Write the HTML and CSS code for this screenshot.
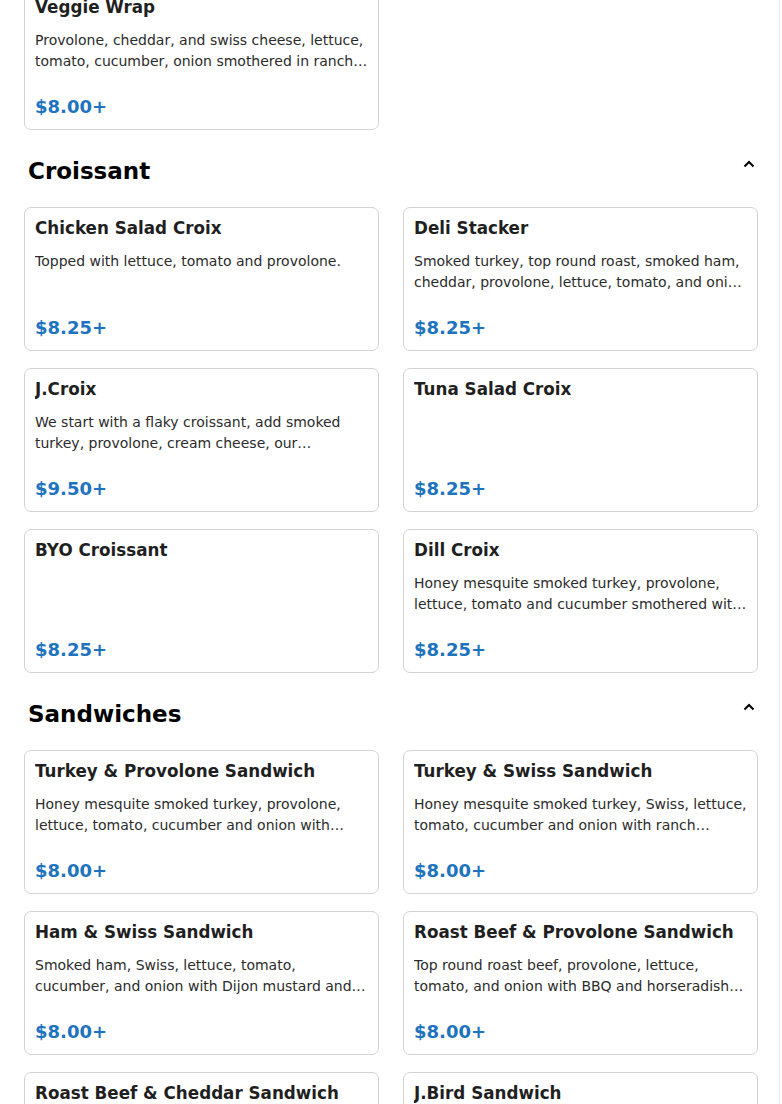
FILE: index.html
```html
<!DOCTYPE html>
<html lang="en">
<head>
<meta charset="utf-8">
<title>Menu</title>
<link rel="stylesheet" href="styles.css">
</head>
<body>
<div class="page">
  <main class="menu">
    <section class="section section-first">
      <div class="grid">
        <article class="card">
          <h3 class="card-title">Veggie Wrap</h3>
          <p class="card-desc">Provolone, cheddar, and swiss cheese, lettuce, tomato, cucumber, onion smothered in ranch dressing.</p>
          <div class="card-price">$8.00+</div>
        </article>
      </div>
    </section>

    <section class="section">
      <header class="section-head">
        <h2 class="section-title">Croissant</h2>
        <button class="toggle" aria-label="Collapse">
          <svg width="12" height="8" viewBox="0 0 12 8"><polyline points="1.5,6.5 6,2 10.5,6.5" fill="none" stroke="#000" stroke-width="2"/></svg>
        </button>
      </header>
      <div class="grid">
        <article class="card">
          <h3 class="card-title">Chicken Salad Croix</h3>
          <p class="card-desc">Topped with lettuce, tomato and provolone.</p>
          <div class="card-price">$8.25+</div>
        </article>
        <article class="card">
          <h3 class="card-title">Deli Stacker</h3>
          <p class="card-desc">Smoked turkey, top round roast, smoked ham, cheddar, provolone, lettuce, tomato, and onion with mayo and mustard.</p>
          <div class="card-price">$8.25+</div>
        </article>
        <article class="card">
          <h3 class="card-title">J.Croix</h3>
          <p class="card-desc">We start with a flaky croissant, add smoked turkey, provolone, cream cheese, our homemade pepper jelly.</p>
          <div class="card-price">$9.50+</div>
        </article>
        <article class="card">
          <h3 class="card-title">Tuna Salad Croix</h3>
          <p class="card-desc"></p>
          <div class="card-price">$8.25+</div>
        </article>
        <article class="card">
          <h3 class="card-title">BYO Croissant</h3>
          <p class="card-desc"></p>
          <div class="card-price">$8.25+</div>
        </article>
        <article class="card">
          <h3 class="card-title">Dill Croix</h3>
          <p class="card-desc">Honey mesquite smoked turkey, provolone, lettuce, tomato and cucumber smothered with dill sauce.</p>
          <div class="card-price">$8.25+</div>
        </article>
      </div>
    </section>

    <section class="section">
      <header class="section-head">
        <h2 class="section-title">Sandwiches</h2>
        <button class="toggle" aria-label="Collapse">
          <svg width="12" height="8" viewBox="0 0 12 8"><polyline points="1.5,6.5 6,2 10.5,6.5" fill="none" stroke="#000" stroke-width="2"/></svg>
        </button>
      </header>
      <div class="grid">
        <article class="card">
          <h3 class="card-title">Turkey &amp; Provolone Sandwich</h3>
          <p class="card-desc">Honey mesquite smoked turkey, provolone, lettuce, tomato, cucumber and onion with ranch dressing.</p>
          <div class="card-price">$8.00+</div>
        </article>
        <article class="card">
          <h3 class="card-title">Turkey &amp; Swiss Sandwich</h3>
          <p class="card-desc">Honey mesquite smoked turkey, Swiss, lettuce, tomato, cucumber and onion with ranch dressing.</p>
          <div class="card-price">$8.00+</div>
        </article>
        <article class="card">
          <h3 class="card-title">Ham &amp; Swiss Sandwich</h3>
          <p class="card-desc">Smoked ham, Swiss, lettuce, tomato, cucumber, and onion with Dijon mustard and mayo.</p>
          <div class="card-price">$8.00+</div>
        </article>
        <article class="card">
          <h3 class="card-title">Roast Beef &amp; Provolone Sandwich</h3>
          <p class="card-desc">Top round roast beef, provolone, lettuce, tomato, and onion with BBQ and horseradish sauce.</p>
          <div class="card-price">$8.00+</div>
        </article>
        <article class="card">
          <h3 class="card-title">Roast Beef &amp; Cheddar Sandwich</h3>
          <p class="card-desc">Top round roast beef, cheddar, lettuce, tomato, and onion with horseradish sauce.</p>
          <div class="card-price">$8.00+</div>
        </article>
        <article class="card">
          <h3 class="card-title">J.Bird Sandwich</h3>
          <p class="card-desc">Smoked turkey, bacon, provolone, lettuce, tomato and onion with ranch dressing.</p>
          <div class="card-price">$8.50+</div>
        </article>
      </div>
    </section>
  </main>
</div>
</body>
</html>
```

FILE: styles.css
```css
* { box-sizing: border-box; }

html, body {
  margin: 0;
  padding: 0;
  background: #fff;
}

body {
  font-family: "DejaVu Sans", "Noto Sans", sans-serif;
  color: #222;
  overflow: hidden;
}

.page {
  width: 780px;
  min-height: 1104px;
  border-right: 1px solid #ececec;
  padding: 0 21px 0 24px;
}

.menu {
  margin-top: -14px;
}

.section {
  margin-top: 24px;
}

.section-first {
  margin-top: 0;
}

.section-head {
  display: flex;
  justify-content: space-between;
  align-items: flex-start;
  height: 33px;
  margin-bottom: 20px;
  padding: 1px 0 0 4px;
}

.section-title {
  margin: 0;
  font-size: 23px;
  line-height: 32px;
  font-weight: bold;
  color: #000;
}

.toggle {
  width: 18px;
  height: 18px;
  padding: 0;
  border: 0;
  background: none;
  display: flex;
  align-items: center;
  justify-content: center;
}

.toggle svg { display: block; }

.grid {
  display: grid;
  grid-template-columns: 1fr 1fr;
  column-gap: 24px;
  row-gap: 17px;
}

.card {
  height: 144px;
  border: 1px solid #d3d3d3;
  border-radius: 7px;
  padding: 10px;
  display: flex;
  flex-direction: column;
  background: #fff;
}

.card-title {
  margin: 0 0 13px;
  font-size: 16.75px;
  line-height: 20px;
  font-weight: bold;
  color: #1f1f1f;
  white-space: nowrap;
  overflow: hidden;
}

.card-desc {
  margin: 0;
  font-size: 14px;
  line-height: 21px;
  color: #2b2b2b;
  display: -webkit-box;
  -webkit-box-orient: vertical;
  -webkit-line-clamp: 2;
  overflow: hidden;
}

.card-price {
  margin-top: auto;
  padding-bottom: 1px;
  font-size: 18px;
  line-height: 22px;
  font-weight: bold;
  color: #1e73be;
}
```
